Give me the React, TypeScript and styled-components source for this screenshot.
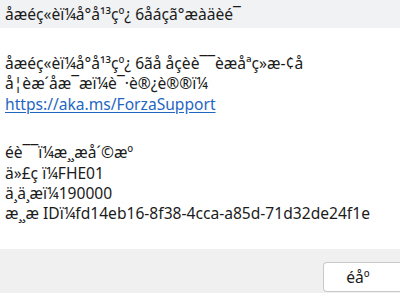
import React from "react";
import styled, { createGlobalStyle } from "styled-components";

const Global = createGlobalStyle`
  html, body { margin: 0; padding: 0; background: #ffffff; }
  body { font-family: "Noto Sans", "Open Sans", sans-serif; }
`;

const Dialog = styled.div`
  width: 400px;
  height: 293px;
  display: flex;
  flex-direction: column;
  overflow: hidden;
  background: #ffffff;
  color: #1b1b1b;
  font-size: 15.6px;
`;

const TitleBar = styled.div`
  height: 28px;
  flex: none;
  display: flex;
  align-items: center;
  padding: 0 5px;
  background: #f1f2f4;
  white-space: nowrap;
`;

const Content = styled.div`
  flex: 1;
  display: flex;
  flex-direction: column;
  gap: 28px;
  padding: 25px 5px 0;
`;

const Block = styled.div`
  display: flex;
  flex-direction: column;
  line-height: 20.4px;
  white-space: nowrap;
`;

const Link = styled.a`
  color: #1f66c1;
  text-decoration: underline;
  text-underline-offset: 2px;
`;

const Footer = styled.div`
  height: 44px;
  flex: none;
  display: flex;
  justify-content: flex-end;
  align-items: flex-start;
  padding-top: 13px;
  box-sizing: border-box;
  background: #f0f0f0;
`;

const Button = styled.button`
  width: 77px;
  height: 30px;
  box-sizing: border-box;
  padding: 0 8px 0 0;
  border: 1px solid #c9c9c9;
  border-right: none;
  border-radius: 4px 0 0 4px;
  background: #ffffff;
  font-family: "Noto Sans", "Open Sans", sans-serif;
  font-size: 15.6px;
  color: #1b1b1b;
`;

export default function App() {
  return (
    <>
      <Global />
      <Dialog>
        <TitleBar>åæéç«èï¼å°å¹³çº¿ 6åáçã°æàäèé¯</TitleBar>
        <Content>
          <Block>
            <span>åæéç«èï¼å°å¹³çº¿ 6ãå åçèè¯¯èæåªç»æ-¢å</span>
            <span>å¦èæ´åæ¯æï¼è¯·è®¿è®®ï¼</span>
            <span>
              <Link href="#">https://aka.ms/ForzaSupport</Link>
            </span>
          </Block>
          <Block>
            <span>éè¯¯ï¼æ¸¸æå´©æº</span>
            <span>ä»£ç ï¼FHE01</span>
            <span>ä¸ä¸æï¼190000</span>
            <span>æ¸¸æ IDï¼fd14eb16-8f38-4cca-a85d-71d32de24f1e</span>
          </Block>
        </Content>
        <Footer>
          <Button>éåº</Button>
        </Footer>
      </Dialog>
    </>
  );
}
